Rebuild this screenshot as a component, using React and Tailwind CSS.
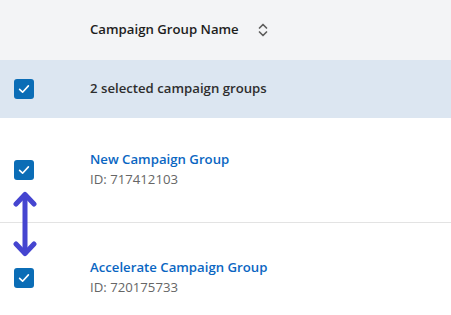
import React from 'react';

// Checked checkbox square
const Check = () => (
  <div className="w-5 h-5 rounded-[3px] bg-[#0b6db6] flex items-center justify-center shrink-0">
    <svg width="14" height="14" viewBox="0 0 14 14" fill="none">
      <path d="M2.6 7.3 L5.6 10.2 L11.4 3.9" stroke="white" strokeWidth="1.6" strokeLinecap="round" strokeLinejoin="round" />
    </svg>
  </div>
);

const SortIcon = () => (
  <svg width="10" height="14" viewBox="0 0 10 14" fill="none">
    <path d="M1.5 5 L5 1.5 L8.5 5" stroke="#5e5e5e" strokeWidth="1.7" strokeLinecap="round" strokeLinejoin="round" />
    <path d="M1.5 9 L5 12.5 L8.5 9" stroke="#5e5e5e" strokeWidth="1.7" strokeLinecap="round" strokeLinejoin="round" />
  </svg>
);

const GROUPS = [
  { name: 'New Campaign Group', id: '717412103' },
  { name: 'Accelerate Campaign Group', id: '720175733' },
];

export default function App() {
  return (
    <div className="relative w-[451px] h-[315px] overflow-hidden bg-white font-['Open_Sans',sans-serif]">
      {/* Header */}
      <div className="h-[60px] bg-[#f3f4f6] flex items-center pl-[90px]">
        <span className="text-[13.2px] font-semibold text-[#1d1d1d]">Campaign Group Name</span>
        <span className="ml-[19px] flex items-center"><SortIcon /></span>
      </div>

      {/* Selection summary */}
      <div className="h-[58px] bg-[#dce6f1] flex items-center pl-[14px]">
        <Check />
        <span className="ml-[56px] text-[13.2px] font-semibold text-[#2e2e2e]">2 selected campaign groups</span>
      </div>

      {/* Rows */}
      {GROUPS.map((g, i) => (
        <div
          key={g.id}
          className={`flex items-center pl-[14px] ${i === 0 ? 'h-[105px] border-b border-[#e3e3e3]' : 'h-[110px]'}`}
        >
          <Check />
          <div className="ml-[56px] flex flex-col -mt-[2px]">
            <span className="text-[13.2px] font-semibold text-[#0a66c2] leading-[20px]">{g.name}</span>
            <span className="text-[13.2px] text-[#666666] leading-[20px]">ID: {g.id}</span>
          </div>
        </div>
      ))}

      {/* Reorder annotation arrow */}
      <svg className="absolute left-[12px] top-[191px]" width="26" height="66" viewBox="0 0 26 66" fill="none">
        <path d="M13 4 L13 62" stroke="#4545d0" strokeWidth="5" strokeLinecap="round" />
        <path d="M4 13 L13 3.5 L22 13" stroke="#4545d0" strokeWidth="5" strokeLinecap="round" strokeLinejoin="round" />
        <path d="M4 53 L13 62.5 L22 53" stroke="#4545d0" strokeWidth="5" strokeLinecap="round" strokeLinejoin="round" />
      </svg>
    </div>
  );
}
